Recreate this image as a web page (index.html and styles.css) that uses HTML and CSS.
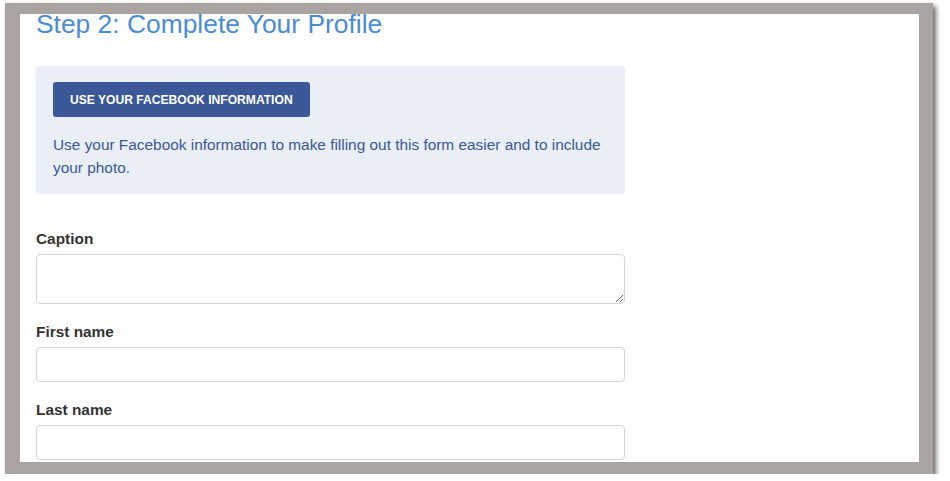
FILE: index.html
```html
<!DOCTYPE html>
<html lang="en">
<head>
    <meta charset="UTF-8">
    <meta name="viewport" content="width=device-width, initial-scale=1.0">
    <title>Step 2: Complete Your Profile</title>
    <link rel="stylesheet" href="styles.css">
</head>
<body>
    <div class="frame">
        <div class="page">
            <h1 class="step-title">Step 2: Complete Your Profile</h1>

            <div class="fb-panel">
                <button class="fb-btn" type="button">Use your Facebook information</button>
                <p>Use your Facebook information to make filling out this form easier and to include your photo.</p>
            </div>

            <form class="profile-form">
                <div class="form-group">
                    <label for="caption">Caption</label>
                    <textarea id="caption" class="field field-area"></textarea>
                </div>
                <div class="form-group">
                    <label for="first-name">First name</label>
                    <input id="first-name" class="field" type="text">
                </div>
                <div class="form-group">
                    <label for="last-name">Last name</label>
                    <input id="last-name" class="field" type="text">
                </div>
            </form>
        </div>
    </div>
</body>
</html>
```

FILE: styles.css
```css
body {
    margin: 0;
    background-color: #fff;
    font-family: "Liberation Sans", Arial, sans-serif;
    color: #333;
}
.frame {
    box-sizing: border-box;
    width: 928px;
    height: 471px;
    margin: 3px 0 0 5px;
    border-style: solid;
    border-color: #a9a4a2;
    border-width: 11px 14px 12px 15px;
    box-shadow: 3px 3px 5px rgba(0, 0, 0, 0.6);
    background-color: #fff;
    overflow: hidden;
}
.page {
    width: 589px;
    padding-left: 16px;
}
.step-title {
    margin: -5px 0 27px;
    font-size: 26.4px;
    line-height: 30px;
    font-weight: normal;
    color: #4a8cd4;
}
.fb-panel {
    padding: 16px 17px 15px;
    background-color: #e9eef7;
    border-radius: 4px;
}
.fb-btn {
    display: block;
    height: 35px;
    padding: 0 17px;
    border: none;
    border-radius: 3px;
    background-color: #3b5998;
    color: #fff;
    font-family: inherit;
    font-size: 12.1px;
    font-weight: bold;
    text-transform: uppercase;
    cursor: pointer;
}
.fb-panel p {
    margin: 16px 0 0;
    font-size: 15.4px;
    line-height: 23px;
    color: #3b5998;
}
.profile-form {
    margin-top: 35px;
}
.form-group {
    margin-bottom: 18px;
}
.form-group label {
    display: block;
    margin-bottom: 5px;
    font-size: 15.4px;
    line-height: 20px;
    font-weight: bold;
    color: #333;
}
.field {
    display: block;
    box-sizing: border-box;
    width: 100%;
    height: 35px;
    margin: 0;
    padding: 6px 12px;
    border: 1px solid #d4d4d4;
    border-radius: 4px;
    background-color: #fff;
    font-family: inherit;
    font-size: 14px;
}
.field-area {
    height: 50px;
    resize: vertical;
}
```
